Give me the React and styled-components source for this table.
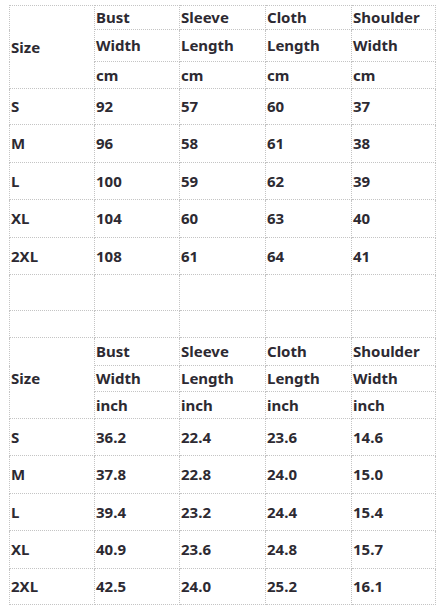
import React from 'react';
import styled, { createGlobalStyle } from 'styled-components';

const GlobalStyle = createGlobalStyle`
  html, body { margin: 0; padding: 0; background: #fff; }
  body { font-family: "Noto Sans", "Open Sans", sans-serif; }
`

const Page = styled.div`
  padding: 5px 0 0 9px;
`

const SizeTable = styled.table`
  border-collapse: collapse;
  table-layout: fixed;
  width: 426px;
  font-size: 15px;
  font-weight: 700;
  color: #2d2a32;
`

const Col = styled.col`
  width: ${({ $w }) => $w}px;
`

const Row = styled.tr`
  height: ${({ $h }) => $h}px;
`

const Cell = styled.td`
  border: 1px dotted #c4c4c4;
  padding: 0 0 0 1px;
  vertical-align: middle;
  white-space: nowrap;
  line-height: 1;
`

const columns = [85, 85, 86, 86, 84];

const headers = [
  ['Bust', 'Sleeve', 'Cloth', 'Shoulder'],
  ['Width', 'Length', 'Length', 'Width'],
];

const cmRows = [
  ['S', '92', '57', '60', '37'],
  ['M', '96', '58', '61', '38'],
  ['L', '100', '59', '62', '39'],
  ['XL', '104', '60', '63', '40'],
  ['2XL', '108', '61', '64', '41'],
];

const inchRows = [
  ['S', '36.2', '22.4', '23.6', '14.6'],
  ['M', '37.8', '22.8', '24.0', '15.0'],
  ['L', '39.4', '23.2', '24.4', '15.4'],
  ['XL', '40.9', '23.6', '24.8', '15.7'],
  ['2XL', '42.5', '24.0', '25.2', '16.1'],
];

function HeaderBlock({ unit, heights }) {
  return (
    <>
      <Row $h={heights[0]}>
        <Cell rowSpan={3}>Size</Cell>
        {headers[0].map((t, i) => <Cell key={i}>{t}</Cell>)}
      </Row>
      <Row $h={heights[1]}>
        {headers[1].map((t, i) => <Cell key={i}>{t}</Cell>)}
      </Row>
      <Row $h={heights[2]}>
        {headers[0].map((_, i) => <Cell key={i}>{unit}</Cell>)}
      </Row>
    </>
  );
}

function BodyRows({ rows, heights }) {
  return rows.map((r, i) => (
    <Row key={r[0]} $h={heights[i]}>
      {r.map((v, j) => <Cell key={j}>{v}</Cell>)}
    </Row>
  ));
}

export default function App() {
  return (
    <Page>
      <GlobalStyle />
      <SizeTable>
        <colgroup>
          {columns.map((w, i) => <Col key={i} $w={w} />)}
        </colgroup>
        <tbody>
          <HeaderBlock unit="cm" heights={[24, 32, 27]} />
          <BodyRows rows={cmRows} heights={[36, 38, 37, 38, 37]} />
          <Row $h={36}>{columns.map((_, i) => <Cell key={i} />)}</Row>
          <Row $h={27}>{columns.map((_, i) => <Cell key={i} />)}</Row>
          <HeaderBlock unit="inch" heights={[28, 26, 27]} />
          <BodyRows rows={inchRows} heights={[37, 38, 37, 38, 36]} />
        </tbody>
      </SizeTable>
    </Page>
  );
}
